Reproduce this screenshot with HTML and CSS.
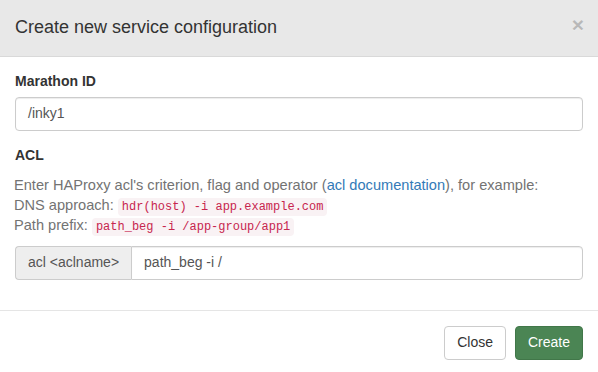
FILE: index.html
```html
<!DOCTYPE html>
<html>
<head>
<meta charset="utf-8">
<link rel="stylesheet" href="styles.css">
</head>
<body>
<div class="modal">
  <div class="modal-header">
    <h4 class="modal-title">Create new service configuration</h4>
    <button class="close" type="button">&times;</button>
  </div>
  <div class="modal-body">
    <div class="form-group">
      <label class="label">Marathon ID</label>
      <div class="form-control">/inky1</div>
    </div>
    <div class="form-group">
      <label class="label">ACL</label>
      <div class="help-block">
        Enter HAProxy acl's criterion, flag and operator (<a class="link">acl documentation</a>), for example:<br>
        DNS approach: <code>hdr(host) -i app.example.com</code><br>
        Path prefix: <code>path_beg -i /app-group/app1</code>
      </div>
      <div class="input-group">
        <span class="addon">acl &lt;aclname&gt;</span>
        <div class="form-control group-control">path_beg -i /</div>
      </div>
    </div>
  </div>
  <div class="modal-footer">
    <button class="btn btn-default" type="button">Close</button>
    <button class="btn btn-success" type="button">Create</button>
  </div>
</div>
</body>
</html>
```

FILE: styles.css
```css
* { box-sizing: border-box; }
html, body { margin: 0; padding: 0; background: #fff; }
body {
  font-family: "Liberation Sans", Arial, Helvetica, sans-serif;
  font-size: 14px;
  line-height: 1.42857;
  color: #333;
}
.modal { width: 598px; }
.modal-header {
  background: #e8e8e8;
  padding: 15px;
  border-bottom: 1px solid #d9d9d9;
  display: flex;
  align-items: flex-start;
  justify-content: space-between;
}
.modal-title {
  margin: 0;
  font-size: 18px;
  font-weight: 500;
  line-height: 1.42857;
  color: #333;
}
.close {
  background: none;
  border: 0;
  padding: 0;
  margin-top: -1px;
  margin-right: -1px;
  font-family: "Liberation Sans", Arial, sans-serif;
  font-size: 21px;
  font-weight: bold;
  line-height: 1;
  color: #000;
  opacity: 0.2;
  text-shadow: 0 1px 0 #fff;
}
.modal-body { padding: 15px; }
.form-group { margin-bottom: 15px; }
.label {
  display: block;
  font-weight: bold;
  margin-bottom: 5px;
}
.form-control {
  height: 34px;
  padding: 6px 12px;
  font-size: 14px;
  line-height: 1.42857;
  color: #555;
  background: #fff;
  border: 1px solid #ccc;
  border-radius: 4px;
  box-shadow: inset 0 1px 1px rgba(0,0,0,.075);
}
.help-block {
  color: #737373;
  font-size: 14.6px;
  line-height: 20px;
  margin-top: 9px;
  margin-bottom: 11px;
  margin-left: -1px;
}
.link { color: #337ab7; text-decoration: none; }
code {
  font-family: Consolas, "Liberation Mono", "DejaVu Sans Mono", monospace;
  font-size: 12px;
  line-height: 1;
  padding: 2px 4px;
  color: #c7254e;
  background: #f9f2f4;
  border-radius: 4px;
}
.input-group { display: flex; }
.addon {
  display: block;
  padding: 6px 12px;
  height: 34px;
  font-size: 14px;
  line-height: 1.42857;
  color: #555;
  background: #eee;
  border: 1px solid #ccc;
  border-right: 0;
  border-radius: 4px 0 0 4px;
  white-space: nowrap;
}
.group-control {
  flex: 1;
  border-radius: 0 4px 4px 0;
}
.modal-footer {
  padding: 15px;
  border-top: 1px solid #e5e5e5;
  display: flex;
  justify-content: flex-end;
  gap: 9px;
}
.btn {
  font-family: "Liberation Sans", Arial, sans-serif;
  font-size: 14px;
  line-height: 1.42857;
  padding: 6px 12px;
  border: 1px solid transparent;
  border-radius: 4px;
  height: 34px;
}
.btn-default { background: #fff; color: #333; border-color: #ccc; }
.btn-success { background: #4b8554; color: #fff; border-color: #417749; }
```
